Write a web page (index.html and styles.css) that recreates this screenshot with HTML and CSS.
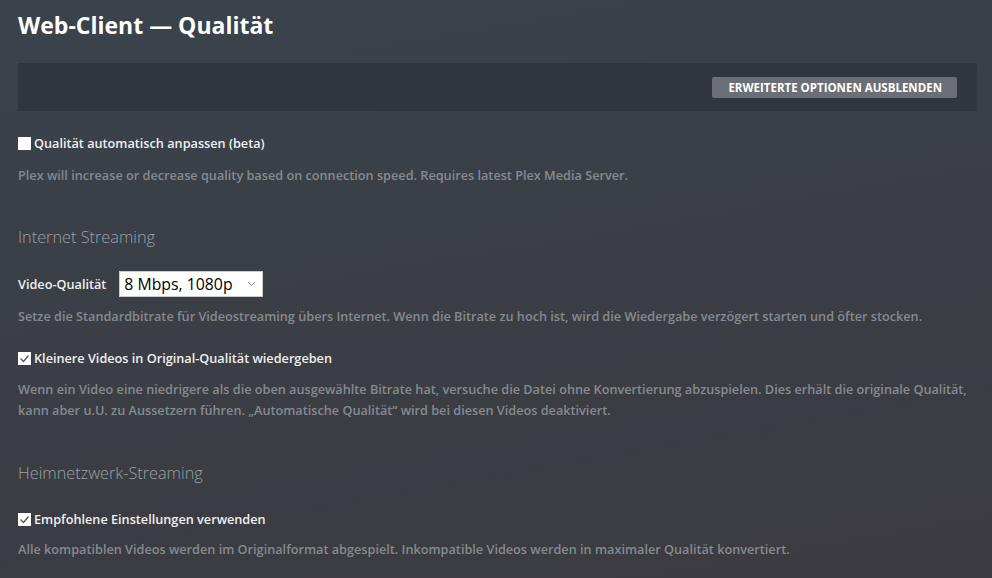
FILE: index.html
```
<!DOCTYPE html>
<html lang="de">
<head>
<meta charset="utf-8">
<title>Web-Client — Qualität</title>
<link rel="stylesheet" href="styles.css">
</head>
<body>
<main class="page">
  <h1 class="title">Web-Client — Qualität</h1>
  <div class="toolbar">
    <button class="btn">Erweiterte Optionen ausblenden</button>
  </div>

  <div class="check-row first">
    <span class="box"></span>
    <span class="label">Qualität automatisch anpassen (beta)</span>
  </div>
  <p class="desc d1">Plex will increase or decrease quality based on connection speed. Requires latest Plex Media Server.</p>

  <h2 class="section">Internet Streaming</h2>
  <div class="select-row">
    <span class="label">Video-Qualität</span>
    <div class="select">
      <span class="select-text">8 Mbps, 1080p</span>
      <svg class="chev" width="9" height="6" viewBox="0 0 9 6"><path d="M1 1l3.5 3.5L8 1" fill="none" stroke="#888" stroke-width="1"/></svg>
    </div>
  </div>
  <p class="desc d2">Setze die Standardbitrate für Videostreaming übers Internet. Wenn die Bitrate zu hoch ist, wird die Wiedergabe verzögert starten und öfter stocken.</p>

  <div class="check-row r2">
    <span class="box"><svg width="13" height="13" viewBox="0 0 13 13"><path d="M2.5 6.5l3 3 5-6" fill="none" stroke="#555" stroke-width="1.3"/></svg></span>
    <span class="label">Kleinere Videos in Original-Qualität wiedergeben</span>
  </div>
  <p class="desc d3">Wenn ein Video eine niedrigere als die oben ausgewählte Bitrate hat, versuche die Datei ohne Konvertierung abzuspielen. Dies erhält die originale Qualität, kann aber u.U. zu Aussetzern führen. „Automatische Qualität“ wird bei diesen Videos deaktiviert.</p>

  <h2 class="section s2">Heimnetzwerk-Streaming</h2>
  <div class="check-row r3">
    <span class="box"><svg width="13" height="13" viewBox="0 0 13 13"><path d="M2.5 6.5l3 3 5-6" fill="none" stroke="#555" stroke-width="1.3"/></svg></span>
    <span class="label">Empfohlene Einstellungen verwenden</span>
  </div>
  <p class="desc d4">Alle kompatiblen Videos werden im Originalformat abgespielt. Inkompatible Videos werden in maximaler Qualität konvertiert.</p>
</main>
</body>
</html>
```

FILE: styles.css
```
html, body {
  margin: 0;
  padding: 0;
  height: 100%;
}
body {
  background: linear-gradient(170deg, #3a434c 0%, #3b3e45 50%, #3c3b41 100%);
  font-family: "Open Sans", "Liberation Sans", sans-serif;
  color: #eee;
  overflow: hidden;
}
.page {
  padding: 0 15px 0 18px;
}
.title {
  margin: 10px 0 0;
  font-size: 23px;
  line-height: 30px;
  font-weight: 700;
  color: #fff;
}
.toolbar {
  margin-top: 23px;
  height: 48px;
  background: #31363d;
  display: flex;
  align-items: center;
  justify-content: flex-end;
  padding-right: 20px;
}
.btn {
  background: #6b6f75;
  border: none;
  border-radius: 2px;
  color: #fff;
  font-family: inherit;
  font-size: 11.5px;
  font-weight: 700;
  text-transform: uppercase;
  height: 21px;
  padding: 0 15px 0 16px;
}
.check-row {
  display: flex;
  align-items: center;
  gap: 3px;
  height: 20px;
}
.check-row.first { margin-top: 22px; }
.check-row.r2 { margin-top: 22px; }
.check-row.r3 { margin-top: 24px; }
.box {
  width: 13px;
  height: 13px;
  background: #fff;
  display: flex;
  flex: none;
}
.label {
  font-size: 12.7px;
  font-weight: 600;
  color: #f0f0f0;
}
.desc {
  margin: 0;
  font-size: 12.7px;
  line-height: 20px;
  font-weight: 600;
  color: #868a90;
}
.d1 { margin-top: 12px; }
.d2 { margin-top: 9px; }
.d3 { margin-top: 11px; line-height: 21px; }
.d4 { margin-top: 10px; }
.section {
  margin: 40px 0 0;
  font-size: 16.3px;
  line-height: 24px;
  font-weight: 300;
  color: #9ca0a5;
}
.s2 { margin-top: 40px; }
.select-row {
  margin-top: 22px;
  display: flex;
  align-items: center;
  gap: 13px;
}
.select {
  width: 144px;
  height: 26px;
  box-sizing: border-box;
  background: #fff;
  border: 1px solid #ccc;
  display: flex;
  align-items: center;
  justify-content: space-between;
  padding: 0 6px 0 4px;
}
.select-text {
  font-size: 15.8px;
  color: #000;
  font-weight: 400;
}
```
